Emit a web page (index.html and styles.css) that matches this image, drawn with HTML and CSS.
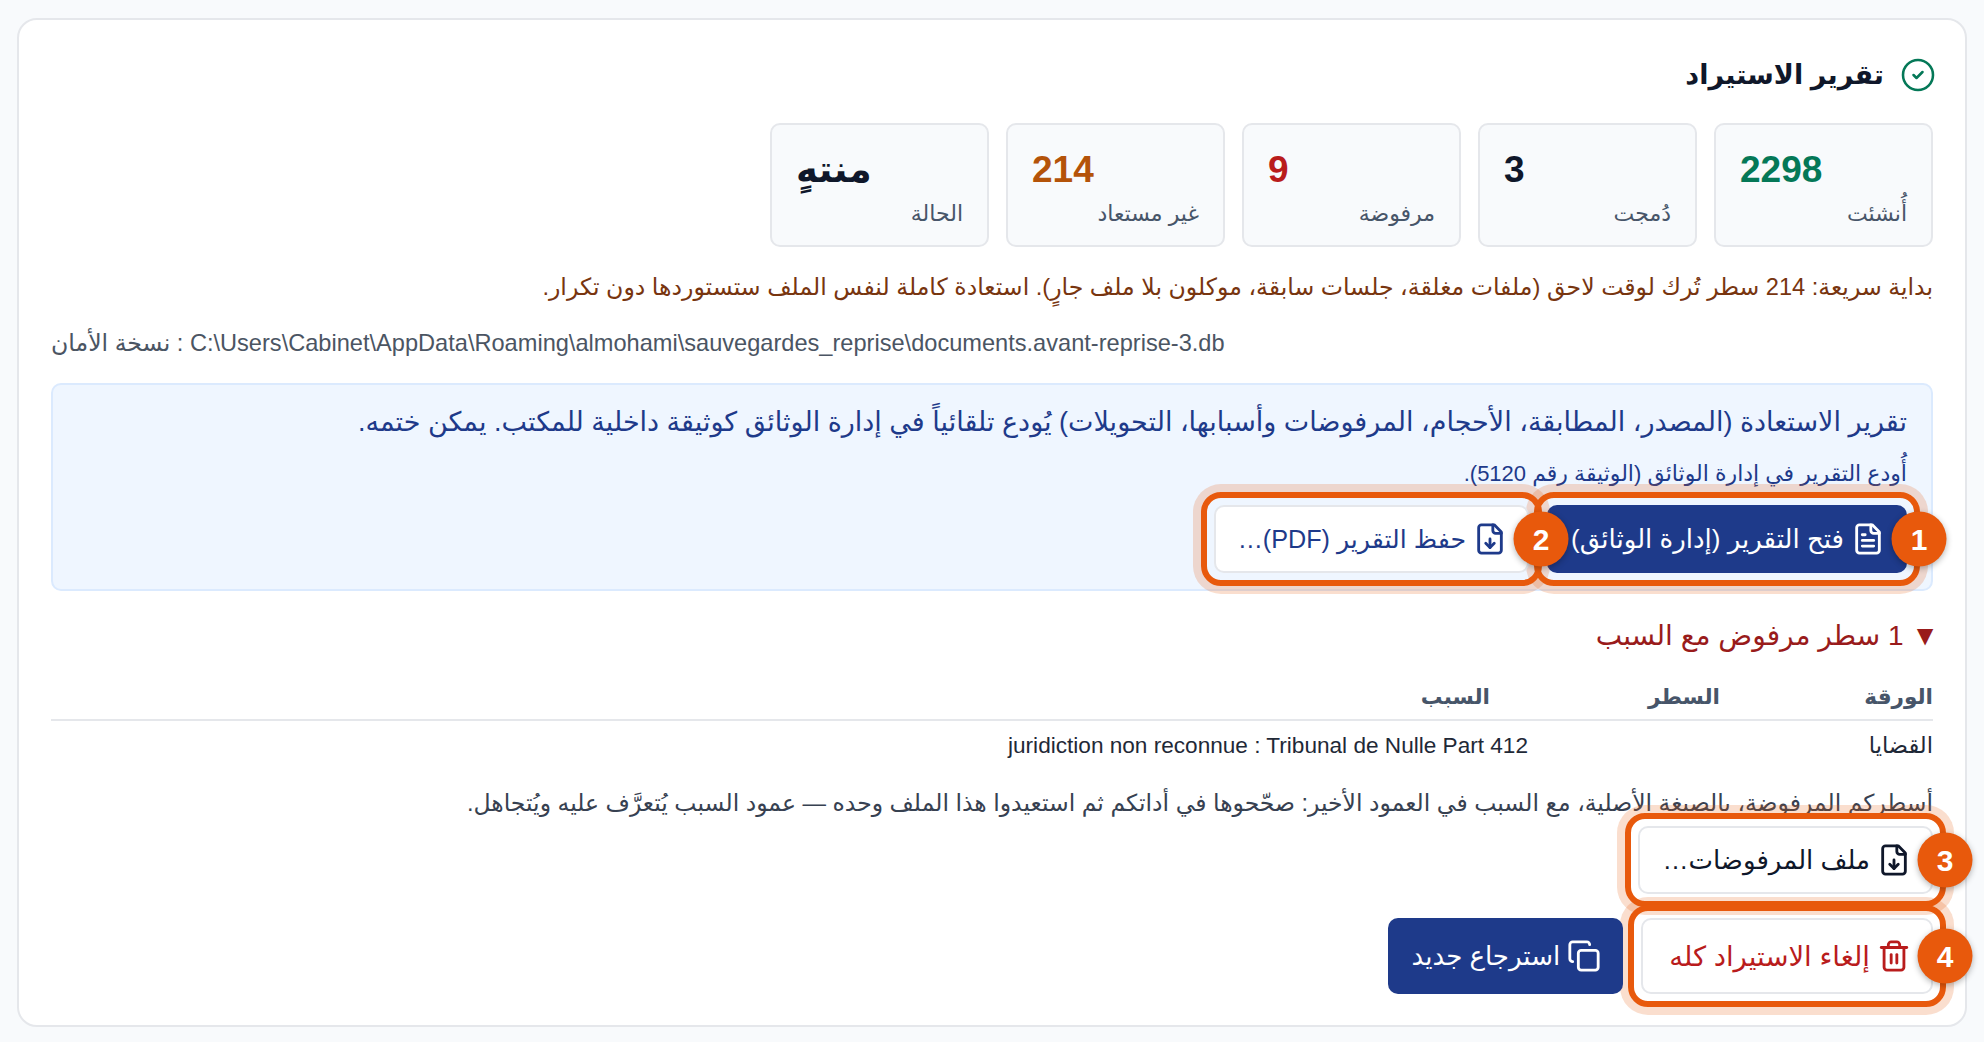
FILE: index.html
```html
<!DOCTYPE html>
<html lang="ar" dir="rtl">
<head>
    <meta charset="UTF-8">
    <title>تقرير الاستيراد</title>
    <link rel="stylesheet" href="styles.css">
</head>
<body>
    <div class="card">
        <h2 class="title">
            <svg class="icon title-icon" viewBox="0 0 24 24"><circle cx="12" cy="12" r="10"/><path d="m9 12 2 2 4-4"/></svg>
            تقرير الاستيراد
        </h2>

        <div class="stats">
            <div class="stat"><div class="stat-value green">2298</div><div class="stat-label">أُنشئت</div></div>
            <div class="stat"><div class="stat-value">3</div><div class="stat-label">دُمجت</div></div>
            <div class="stat"><div class="stat-value red">9</div><div class="stat-label">مرفوضة</div></div>
            <div class="stat"><div class="stat-value orange">214</div><div class="stat-label">غير مستعاد</div></div>
            <div class="stat"><div class="stat-value">منتهٍ</div><div class="stat-label">الحالة</div></div>
        </div>

        <p class="note">بداية سريعة: 214 سطر تُرك لوقت لاحق (ملفات مغلقة، جلسات سابقة، موكلون بلا ملف جارٍ). استعادة كاملة لنفس الملف ستستوردها دون تكرار.</p>
        <p class="path" dir="ltr">نسخة الأمان : C:\Users\Cabinet\AppData\Roaming\almohami\sauvegardes_reprise\documents.avant-reprise-3.db</p>

        <div class="panel">
            <p class="panel-text">تقرير الاستعادة (المصدر، المطابقة، الأحجام، المرفوضات وأسبابها، التحويلات) يُودع تلقائياً في إدارة الوثائق كوثيقة داخلية للمكتب. يمكن ختمه.</p>
            <p class="panel-sub">أُودع التقرير في إدارة الوثائق (الوثيقة رقم 5120).</p>
            <div class="actions">
                <button class="btn btn-primary marked">
                    <svg class="icon" viewBox="0 0 24 24"><path d="M15 2H6a2 2 0 0 0-2 2v16a2 2 0 0 0 2 2h12a2 2 0 0 0 2-2V7Z"/><path d="M14 2v4a2 2 0 0 0 2 2h4"/><path d="M10 9H8"/><path d="M16 13H8"/><path d="M16 17H8"/></svg>
                    فتح التقرير (إدارة الوثائق)
                    <span class="badge">1</span>
                </button>
                <button class="btn btn-light btn-blue marked">
                    <svg class="icon" viewBox="0 0 24 24"><path d="M15 2H6a2 2 0 0 0-2 2v16a2 2 0 0 0 2 2h12a2 2 0 0 0 2-2V7Z"/><path d="M14 2v4a2 2 0 0 0 2 2h4"/><path d="M12 18v-6"/><path d="m9 15 3 3 3-3"/></svg>
                    حفظ التقرير (PDF)…
                    <span class="badge">2</span>
                </button>
            </div>
        </div>

        <div class="rejects-title"><span class="caret">▼</span> 1 سطر مرفوض مع السبب</div>
        <table class="rejects">
            <thead>
                <tr><th class="col-sheet">الورقة</th><th class="col-line">السطر</th><th>السبب</th></tr>
            </thead>
            <tbody>
                <tr><td>القضايا</td><td colspan="2" class="reason">juridiction non reconnue : Tribunal de Nulle Part 412</td></tr>
            </tbody>
        </table>
        <p class="hint">أسطركم المرفوضة، بالصيغة الأصلية، مع السبب في العمود الأخير: صحّحوها في أداتكم ثم استعيدوا هذا الملف وحده — عمود السبب يُتعرَّف عليه ويُتجاهل.</p>

        <div class="actions file-row">
            <button class="btn btn-light marked">
                <svg class="icon" viewBox="0 0 24 24"><path d="M15 2H6a2 2 0 0 0-2 2v16a2 2 0 0 0 2 2h12a2 2 0 0 0 2-2V7Z"/><path d="M14 2v4a2 2 0 0 0 2 2h4"/><path d="M12 18v-6"/><path d="m9 15 3 3 3-3"/></svg>
                ملف المرفوضات…
                <span class="badge">3</span>
            </button>
        </div>
        <div class="actions end-row">
            <button class="btn btn-light btn-danger marked">
                <svg class="icon" viewBox="0 0 24 24"><path d="M3 6h18"/><path d="M19 6v14c0 1-1 2-2 2H7c-1 0-2-1-2-2V6"/><path d="M8 6V4c0-1 1-2 2-2h4c1 0 2 1 2 2v2"/><path d="M10 11v6"/><path d="M14 11v6"/></svg>
                إلغاء الاستيراد كله
                <span class="badge">4</span>
            </button>
            <button class="btn btn-primary">
                <svg class="icon" viewBox="0 0 24 24"><rect x="8" y="8" width="14" height="14" rx="2"/><path d="M4 16c-1.1 0-2-.9-2-2V4c0-1.1.9-2 2-2h10c1.1 0 2 .9 2 2"/></svg>
                استرجاع جديد
            </button>
        </div>
    </div>
</body>
</html>
```

FILE: styles.css
```css
* {
    margin: 0;
    padding: 0;
    box-sizing: border-box;
}

body {
    font-family: 'Liberation Sans', 'DejaVu Sans', sans-serif;
    background-color: #f8fafc;
    color: #0f172a;
    padding: 18px 17px 16px;
}

.card {
    background-color: #fff;
    border: 2px solid #e5e7eb;
    border-radius: 20px;
    padding: 32px 32px 31px;
}

.icon {
    width: 34px;
    height: 34px;
    fill: none;
    stroke: currentColor;
    stroke-width: 2;
    stroke-linecap: round;
    stroke-linejoin: round;
    flex-shrink: 0;
}

.title {
    display: flex;
    align-items: center;
    gap: 16px;
    font-size: 27px;
    line-height: 46px;
    font-weight: 700;
    margin-bottom: 25px;
}

.title-icon {
    width: 36px;
    height: 36px;
    margin-right: -3px;
    stroke-width: 1.7;
    color: #047857;
}

.stats {
    display: flex;
    gap: 17px;
    margin-bottom: 23px;
}

.stat {
    width: 219px;
    height: 124px;
    background-color: #f8fafc;
    border: 2px solid #e5e7eb;
    border-radius: 10px;
    padding: 22px 24px 0;
}

.stat-value {
    font-size: 37px;
    line-height: 46px;
    font-weight: 700;
    text-align: left;
}

.stat-label {
    font-size: 22px;
    line-height: 30px;
    margin-top: 6px;
    color: #475569;
}

.green { color: #047857; }
.red { color: #b91c1c; }
.orange { color: #b45309; }

.note {
    font-size: 23.6px;
    line-height: 34px;
    color: #78350f;
    margin-bottom: 22px;
}

.path {
    font-size: 23.6px;
    line-height: 34px;
    color: #4b5563;
    margin-bottom: 23px;
}

.panel {
    background-color: #eff6ff;
    border: 2px solid #dbeafe;
    border-radius: 10px;
    padding: 17px 24px 16px;
    color: #1e3a8a;
    margin-bottom: 25px;
}

.panel-text {
    font-size: 27px;
    line-height: 40px;
    margin-bottom: 17px;
}

.panel-sub {
    font-size: 22px;
    line-height: 30px;
    margin-bottom: 16px;
}

.actions {
    display: flex;
    gap: 18px;
}

.btn {
    position: relative;
    display: inline-flex;
    align-items: center;
    gap: 7px;
    height: 68px;
    padding: 0 20px 0 22px;
    font-family: inherit;
    font-size: 26px;
    border-radius: 10px;
    border: 2px solid transparent;
}

.btn-primary {
    background-color: #1e3a8a;
    color: #fff;
}

.btn-light {
    background-color: #fff;
    color: #0f172a;
    border-color: #e5e7eb;
}

.btn-blue {
    color: #1e3a8a;
    font-size: 25.2px;
}

.btn-danger {
    color: #b91c1c;
    font-size: 27.5px;
    padding-left: 26px;
}

.marked::before {
    content: "";
    position: absolute;
    inset: -15px;
    border: 6px solid #e8590c;
    border-radius: 20px;
    box-shadow: 0 0 0 8px rgba(232, 89, 12, 0.2);
}

.badge {
    position: absolute;
    top: 50%;
    right: -14px;
    width: 55px;
    height: 55px;
    transform: translate(50%, -50%);
    display: flex;
    align-items: center;
    justify-content: center;
    border-radius: 50%;
    background-color: #e8590c;
    color: #fff;
    font-size: 30px;
    font-weight: 700;
    box-shadow: 0 2px 6px rgba(0, 0, 0, 0.3);
    z-index: 2;
}

.rejects-title {
    font-size: 28px;
    line-height: 40px;
    color: #991b1b;
    margin-bottom: 18px;
}

.caret {
    font-size: 28px;
    line-height: 1;
    margin-right: -6px;
}

.rejects {
    width: 100%;
    border-collapse: collapse;
    font-size: 22.6px;
}

.rejects th {
    text-align: right;
    font-size: 21.6px;
    font-weight: 700;
    color: #475569;
    height: 46px;
    border-bottom: 2px solid #e5e7eb;
}

.col-sheet { width: 213px; }
.col-line { width: 230px; }

.rejects td {
    height: 50px;
    color: #1f2937;
}

.reason { padding-right: 192px; }

.hint {
    font-size: 23.5px;
    line-height: 34px;
    color: #374151;
    margin: 16px 0 6px;
}

.file-row { margin-bottom: 24px; }

.end-row .btn { height: 76px; }
```
